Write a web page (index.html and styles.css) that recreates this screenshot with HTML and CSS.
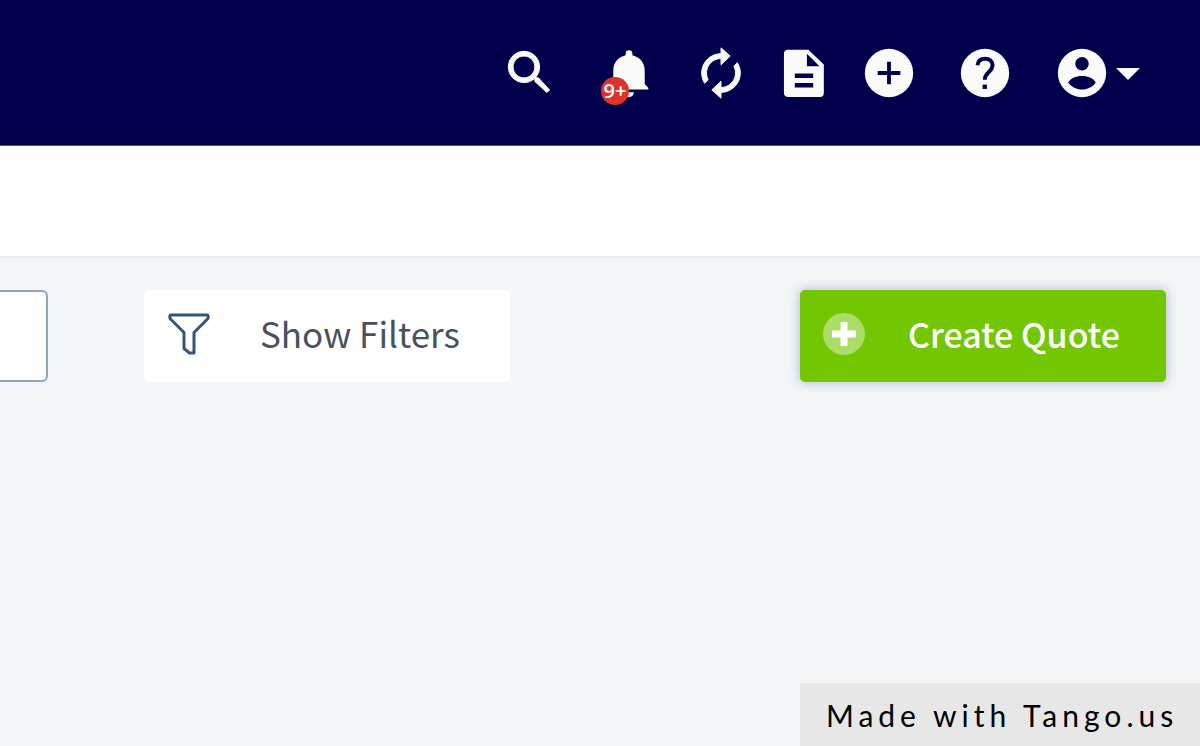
FILE: index.html
```html
<!DOCTYPE html>
<html lang="en">
<head>
<meta charset="utf-8">
<title>Quotes</title>
<link rel="stylesheet" href="styles.css">
</head>
<body>
<header class="topbar">
  <nav class="actions" aria-label="Account tools">
    <button class="icon-button search" type="button" aria-label="Search">
      <svg class="icon heavy" viewBox="0 0 24 24"><path d="M15.500 14h-.79l-.28-.27A6.470 6.470 0 0 0 16 9.500 6.500 6.500 0 1 0 9.500 16c1.610 0 3.090-.59 4.230-1.570l.27.280v.79l5 4.600L20.100 19l-4.600-5zm-6 0C7.010 14 5 11.990 5 9.500S7.010 5 9.500 5 14 7.010 14 9.500 11.990 14 9.500 14z"/></svg>
    </button>
    <button class="icon-button alerts" type="button" aria-label="Notifications">
      <svg class="icon" viewBox="0 0 24 24"><path d="M12 22a2 2 0 0 0 2-2h-4a2 2 0 0 0 2 2zm6.500-5.500V11c0-3.300-2-5.500-5.100-6.300V4a1.400 1.400 0 0 0-2.800 0v.7C7.500 5.500 5.500 7.700 5.500 11v5.500L4 18.200v.6h16v-.6z"/></svg>
      <span class="badge">9+</span>
    </button>
    <button class="icon-button sync" type="button" aria-label="Refresh">
      <svg class="icon heavy" viewBox="0 0 24 24"><path d="M12 6v2.600l3.800-3.600L12 1.600V4c-4.420 0-8 3.580-8 8 0 1.570.46 3.030 1.240 4.260L6.700 14.800A5.870 5.870 0 0 1 6 12c0-3.310 2.690-6 6-6zm6.760 1.740L17.300 9.200c.44.840.7 1.790.7 2.800 0 3.310-2.690 6-6 6v-2.600L8.200 19l3.800 3.400V20c4.420 0 8-3.580 8-8 0-1.570-.46-3.030-1.240-4.260z"/></svg>
    </button>
    <button class="icon-button document" type="button" aria-label="Documents">
      <svg class="icon" viewBox="0 0 24 24"><path fill-rule="evenodd" d="M5.200 2.400h8.600L20.200 8.500v11.800a1.600 1.600 0 0 1-1.600 1.600H5.200a1.500 1.500 0 0 1-1.500-1.600V4A1.500 1.500 0 0 1 5.200 2.400zM13.200 4v5.200h5.200zM8.200 12.200v1.900h7.600v-1.900zm0 3.900V18h7.600v-1.900z"/></svg>
    </button>
    <button class="icon-button add" type="button" aria-label="Add">
      <svg class="icon" viewBox="0 0 24 24"><circle cx="12" cy="12" r="10"/><path class="cutout" d="M11.200 7.300h1.600v3.900h3.900v1.600h-3.900v3.900h-1.600v-3.900H7.300v-1.600h3.900z"/></svg>
    </button>
    <button class="icon-button help" type="button" aria-label="Help">
      <svg class="icon" viewBox="0 0 24 24"><circle cx="12" cy="12" r="10"/><path class="cut-line" d="M8.900 8.800C9.100 7 10.300 6.100 12 6.100c1.900 0 3.100 1.100 3.100 2.700 0 1.500-.8 2.200-1.700 3-.9.800-1.500 1.400-1.500 3"/><path class="cutout" d="M11 16.800h1.800v1.800H11z"/></svg>
    </button>
    <button class="icon-button account" type="button" aria-label="Account">
      <svg class="icon" viewBox="0 0 24 24"><circle cx="12" cy="12" r="10"/><circle class="cutout" cx="12" cy="8.200" r="2.800"/><path class="cutout" d="M6.300 15.900c.8-1.600 3.100-2.700 5.700-2.700s4.900 1.100 5.700 2.700c-1.100 1.700-3.200 2.900-5.700 2.900s-4.600-1.200-5.700-2.900z"/></svg>
      <svg class="caret" viewBox="0 0 24 14"><path d="M0 2h24L12 14z"/></svg>
    </button>
  </nav>
</header>
<div class="subbar"></div>
<main class="content">
  <div class="toolbar">
    <input class="search-box" type="text" aria-label="Search quotes">
    <button class="button filters" type="button">
      <svg class="funnel" viewBox="0 0 42 42"><path d="M2.500 2h37q1.500 2 0 4L26 19.500v20.500h-4.500L16 35.500v-16L2.500 6q-1.500-2 0-4z"/></svg>
      <span class="label">Show Filters</span>
    </button>
    <button class="button create" type="button">
      <svg class="plus" viewBox="0 0 42 42"><circle cx="21" cy="21" r="21"/><path d="M17.500 9h7v8.500H33v7h-8.500V33h-7v-8.500H9v-7h8.500z"/></svg>
      <span class="label">Create Quote</span>
    </button>
  </div>
</main>
<footer class="credit">Made with Tango.us</footer>
</body>
</html>
```

FILE: styles.css
```css
* {
  box-sizing: border-box;
}

body {
  display: flex;
  flex-direction: column;
  min-height: 100vh;
  margin: 0;
  background: #f3f5f7;
  color: #48525f;
  font-family: "Noto Sans CJK SC", "Open Sans", sans-serif;
}

button {
  border: 0;
  font-family: inherit;
  cursor: pointer;
}

.topbar {
  padding: 44px 60px 43px;
  background: #00004d;
  border-bottom: 1px solid #55556f;
}

.actions {
  display: flex;
  justify-content: flex-end;
}

.icon-button {
  position: relative;
  display: flex;
  align-items: center;
  padding: 0;
  background: none;
}

.icon {
  display: block;
  width: 58px;
  height: 58px;
  fill: #fafafa;
}

.heavy {
  stroke: #fafafa;
  stroke-width: 0.4;
  stroke-linejoin: round;
}

.cutout {
  fill: #00004d;
}

.cut-line {
  fill: none;
  stroke: #00004d;
  stroke-width: 1.6;
}

.alerts {
  margin-left: 41px;
}

.sync {
  margin-left: 34px;
}

.document {
  margin-left: 25px;
}

.add {
  margin-left: 27px;
}

.help {
  margin-left: 38px;
}

.account {
  gap: 5px;
  margin-left: 39px;
}

.caret {
  width: 24px;
  height: 14px;
  fill: #fafafa;
}

.badge {
  position: absolute;
  left: 1px;
  bottom: -3px;
  width: 28px;
  height: 28px;
  border-radius: 50%;
  background: #dd332d;
  color: #fff;
  font: 600 20px/28px "Open Sans", sans-serif;
  text-align: center;
}

.subbar {
  height: 112px;
  background: #fff;
  border-bottom: 2px solid #e9ecee;
}

.content {
  flex: 1;
  padding: 32px 34px 0 0;
}

.toolbar {
  display: flex;
  align-items: center;
}

.search-box {
  width: 48px;
  height: 92px;
  border: 2px solid #93a3bb;
  border-left: 0;
  border-radius: 0 6px 6px 0;
  background: #fff;
}

.button {
  display: flex;
  align-items: center;
  width: 366px;
  height: 92px;
  border-radius: 5px;
  line-height: 48px;
  white-space: nowrap;
}

.filters {
  gap: 50px;
  margin-left: 96px;
  padding: 0 24px 4px;
  background: #fff;
  color: #48525f;
  font-size: 35px;
  font-weight: 400;
}

.filters .label {
  padding-bottom: 3px;
}

.funnel {
  width: 42px;
  height: 42px;
  fill: none;
  stroke: #36557d;
  stroke-width: 3;
  stroke-linejoin: round;
}

.create {
  gap: 43px;
  margin-left: auto;
  padding: 0 23px 4px;
  background: #72c702;
  box-shadow: 0 0 12px #aab4d2;
  color: #fff;
  font-size: 34px;
  font-weight: 500;
}

.plus {
  width: 42px;
  height: 42px;
  fill: #fff;
}

.plus circle {
  fill: #abdd68;
}

.credit {
  align-self: flex-end;
  width: 400px;
  padding: 16px 24px 15px 26px;
  background: #e7e7e7;
  color: #000;
  font: 30px/32px Lato, sans-serif;
  letter-spacing: 5px;
  white-space: nowrap;
}
```
